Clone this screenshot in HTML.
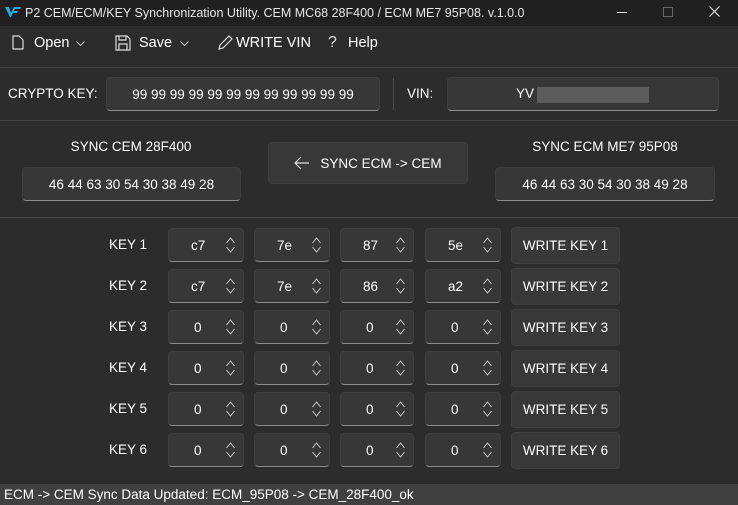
<!DOCTYPE html>
<html><head><style>
*{box-sizing:border-box;margin:0;padding:0}
body{width:738px;height:505px;background:#2c2c2c;font-family:"Liberation Sans",sans-serif;color:#fff;position:relative;overflow:hidden;font-size:13px}
.a{position:absolute}
.t{background:#202020;left:0;top:0;width:738px;height:26px}
.tb{background:#2c2c2c;top:26px;left:0;width:738px;height:41px}
.box{position:absolute;background:#373737;border-radius:4px;border:1px solid #3e3e3e;border-bottom:1px solid #8a8a8a;display:flex;align-items:center;justify-content:center;font-size:13.5px}
.btn{position:absolute;background:#383838;border-radius:4px;border:1px solid #3f3f3f;display:flex;align-items:center;justify-content:center;font-size:13.5px}
.lbl{position:absolute;font-size:13.5px}
.sp{position:absolute;width:9px;height:16px}
</style></head><body>
<div class="a t"></div>
<svg class="a" style="left:5px;top:6px" width="16" height="12" viewBox="0 0 16 12"><path d="M0 1 H4 L6 7 L9 1 H16 L15 3 H10 L6 11 H5 Z" fill="#2aa9e0"/><path d="M9 5 H13 L12 7 H8 Z" fill="#2aa9e0"/></svg>
<div class="lbl" style="left:25px;top:6px;font-size:12.5px;color:#e6e6e6">P2 CEM/ECM/KEY Synchronization Utility. CEM MC68 28F400 / ECM ME7 95P08. v.1.0.0</div>
<div class="a" style="left:617px;top:12px;width:10px;height:1px;background:#ddd"></div>
<div class="a" style="left:663px;top:7px;width:10px;height:10px;border:1px solid #666"></div>
<svg class="a" style="left:709px;top:6px" width="11" height="11" viewBox="0 0 11 11"><path d="M0.5 0.5 L10.5 10.5 M10.5 0.5 L0.5 10.5" stroke="#ddd" stroke-width="1.2"/></svg>
<div class="a tb"></div>
<svg class="a" style="left:12px;top:35px" width="12" height="15" viewBox="0 0 12 15"><path d="M1 1 H7 L11 5 V14 H1 Z" fill="none" stroke="#ddd" stroke-width="1.2"/></svg>
<div class="lbl" style="left:34px;top:35px;font-size:14.5px">Open</div>
<svg class="a" style="left:76px;top:41px" width="9" height="5" viewBox="0 0 9 5"><path d="M0.5 0.5 L4.5 4.5 L8.5 0.5" fill="none" stroke="#ccc"/></svg>
<svg class="a" style="left:115px;top:35px" width="16" height="16" viewBox="0 0 16 16"><path d="M1 1 H12 L15 4 V15 H1 Z M4 1 V5 H11 V1 M4 15 V9 H12 V15" fill="none" stroke="#ddd" stroke-width="1.2"/></svg>
<div class="lbl" style="left:139px;top:35px;font-size:14.5px">Save</div>
<svg class="a" style="left:180px;top:41px" width="9" height="5" viewBox="0 0 9 5"><path d="M0.5 0.5 L4.5 4.5 L8.5 0.5" fill="none" stroke="#ccc"/></svg>
<svg class="a" style="left:217px;top:35px" width="16" height="16" viewBox="0 0 16 16"><path d="M2 14 L3 10 L12 1 L15 4 L6 13 Z" fill="none" stroke="#ddd" stroke-width="1.2"/></svg>
<div class="lbl" style="left:236px;top:35px;font-size:14.5px">WRITE VIN</div>
<div class="lbl" style="left:328px;top:34px;font-size:16px;color:#ddd">?</div>
<div class="lbl" style="left:348px;top:35px;font-size:14.5px">Help</div>
<div class="a" style="left:0;top:67px;width:738px;height:1px;background:#444"></div>
<div class="lbl" style="left:8px;top:86px">CRYPTO KEY:</div>
<div class="box" style="left:106px;top:77px;width:274px;height:34px">99 99 99 99 99 99 99 99 99 99 99 99</div>
<div class="a" style="left:393px;top:78px;width:1px;height:32px;background:#4a4a4a"></div>
<div class="lbl" style="left:407px;top:86px">VIN:</div>
<div class="box" style="left:447px;top:77px;width:272px;height:34px"></div>
<div class="lbl" style="left:516px;top:86px">YV</div>
<div class="a" style="left:537px;top:87px;width:112px;height:16px;background:#5c5c5c"></div>
<div class="a" style="left:0;top:120px;width:738px;height:1px;background:#444"></div>
<div class="lbl" style="left:22px;top:139px;width:218px;text-align:center">SYNC CEM 28F400</div>
<div class="box" style="left:22px;top:167px;width:219px;height:34px">46 44 63 30 54 30 38 49 28</div>
<div class="btn" style="left:268px;top:142px;width:200px;height:42px"><svg width="16" height="14" viewBox="0 0 16 14" style="margin-right:10px"><path d="M7 1 L1 7 L7 13 M1 7 H15" fill="none" stroke="#ddd" stroke-width="1.2"/></svg>SYNC ECM -&gt; CEM</div>
<div class="lbl" style="left:495px;top:139px;width:220px;text-align:center">SYNC ECM ME7 95P08</div>
<div class="box" style="left:495px;top:167px;width:220px;height:34px">46 44 63 30 54 30 38 49 28</div>
<div class="a" style="left:0;top:217px;width:738px;height:1px;background:#444"></div>
<div id="k"></div>
<div class="a" style="left:0;top:484px;width:738px;height:21px;background:#404040"></div>
<div class="lbl" style="left:4px;top:487px">ECM -&gt; CEM Sync Data Updated: ECM_95P08 -&gt; CEM_28F400_ok</div>
<script>
var v=[["c7","7e","87","5e"],["c7","7e","86","a2"],["0","0","0","0"],["0","0","0","0"],["0","0","0","0"],["0","0","0","0"]];
var xs=[168,254,340,425],ws=[76,76,74,76],h="";
for(var i=0;i<6;i++){var y=228+i*41;
h+='<div class="lbl" style="left:109px;top:'+(y+9)+'px">KEY '+(i+1)+'</div>';
for(var j=0;j<4;j++){h+='<div class="box" style="left:'+xs[j]+'px;top:'+y+'px;width:'+ws[j]+'px;height:34px;justify-content:flex-start;padding-left:'+(v[i][j].length>1?22:25)+'px">'+v[i][j]+'</div>';
h+='<svg class="sp" style="left:'+(xs[j]+ws[j]-18)+'px;top:'+(y+9)+'px" viewBox="0 0 9 16"><path d="M0.5 6 L4.5 1 L8.5 6 M0.5 10 L4.5 15 L8.5 10" fill="none" stroke="#ccc" stroke-width="1"/></svg>';}
h+='<div class="btn" style="left:511px;top:'+(y-1)+'px;width:109px;height:37px">WRITE KEY '+(i+1)+'</div>';}
document.getElementById("k").innerHTML=h;
</script>
</body></html>
